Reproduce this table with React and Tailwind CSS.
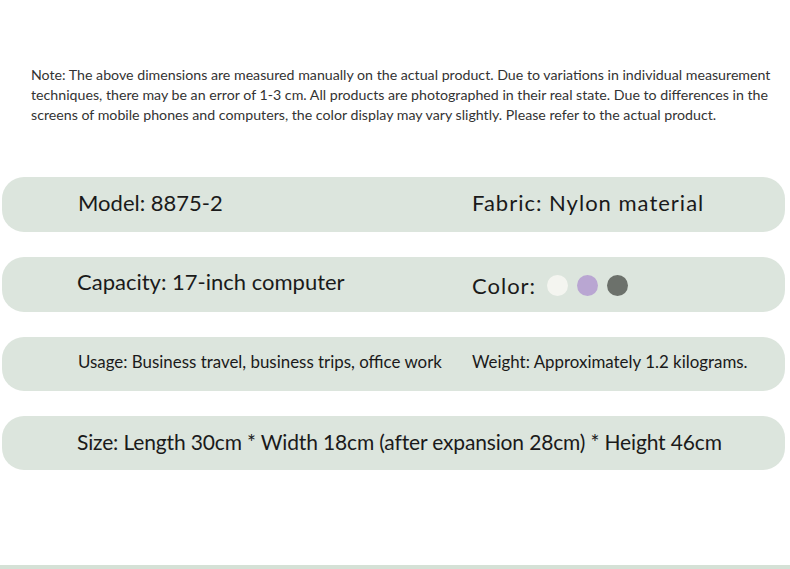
export default function App() {
  const font = { fontFamily: 'Lato, "Noto Sans", sans-serif' };
  return (
    <div className="w-[790px] h-[569px] bg-white relative overflow-hidden text-[#1a1a1a]" style={font}>
      <div className="pt-[65px] pl-[31px] pr-[8px] text-[14.2px] leading-[20px] text-[#333]">
        Note: The above dimensions are measured manually on the actual product. Due to variations in individual measurement techniques, there may be an error of 1-3 cm. All products are photographed in their real state. Due to differences in the screens of mobile phones and computers, the color display may vary slightly. Please refer to the actual product.
      </div>
      <div className="mt-[52px] pl-[2px] pr-[5px] flex flex-col gap-[25px]">
        <div className="h-[55px] rounded-[22px] bg-[#dce5dd] flex items-center text-[22px] pb-[4px]">
          <div className="pl-[76px] w-[470px]">Model: 8875-2</div>
          <div className="tracking-[1px]">Fabric: Nylon material</div>
        </div>
        <div className="h-[55px] rounded-[22px] bg-[#dce5dd] flex items-center text-[22px]">
          <div className="pl-[75px] w-[470px] pb-[6px]">Capacity: 17-inch computer</div>
          <div className="flex items-center pt-[1px]">
            <span className="tracking-[1px]">Color:</span>
            <span className="ml-[11px] w-[21px] h-[21px] rounded-full bg-[#f4f5f0]"></span>
            <span className="ml-[9px] w-[21px] h-[21px] rounded-full bg-[#b9a6d2]"></span>
            <span className="ml-[9px] w-[21px] h-[21px] rounded-full bg-[#6c716b]"></span>
          </div>
        </div>
        <div className="h-[54px] rounded-[22px] bg-[#dce5dd] flex items-center text-[16.9px] pb-[4px]">
          <div className="pl-[76px] w-[470px]">Usage: Business travel, business trips, office work</div>
          <div>Weight: Approximately 1.2 kilograms.</div>
        </div>
        <div className="h-[54px] rounded-[22px] bg-[#dce5dd] flex items-center text-[21px] tracking-[-0.15px] pb-[2px]">
          <div className="pl-[75px]">Size: Length 30cm * Width 18cm (after expansion 28cm) * Height 46cm</div>
        </div>
      </div>
      <div className="absolute left-0 right-0 bottom-0 h-[4px] bg-[#d5e1d6]"></div>
    </div>
  );
}
